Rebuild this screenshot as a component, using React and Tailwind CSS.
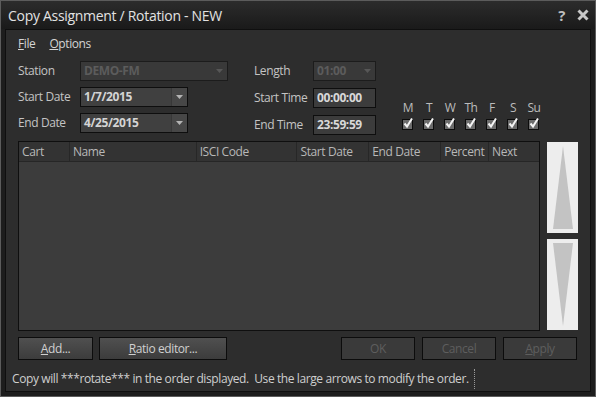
import React from 'react';

const font = { fontFamily: '"Segoe UI", "Open Sans", "Noto Sans", sans-serif', letterSpacing: '-0.4px' };

function Caret({ dim }) {
  return (
    <svg width="7" height="4" viewBox="0 0 7 4">
      <path d="M0 0 L7 0 L3.5 4 Z" fill={dim ? '#575757' : '#b4b4b4'} />
    </svg>
  );
}

function Combo({ value, width, disabled }) {
  return (
    <div
      className={`flex h-[20px] items-center border ${disabled ? 'border-[#1c1c1c] bg-[#393939]' : 'border-[#0e0e0e] bg-[#404040]'}`}
      style={{ width }}
    >
      <span className={`flex-1 pl-[3px] text-[12px] font-bold ${disabled ? 'text-[#5c5c5c]' : 'text-[#d4d4d4]'}`}>{value}</span>
      {disabled ? (
        <span className="flex w-[16px] justify-center"><Caret dim /></span>
      ) : (
        <span className="flex h-full w-[16px] items-center justify-center border-l border-[#383838] bg-[#474747]"><Caret /></span>
      )}
    </div>
  );
}

function TextBox({ value }) {
  return (
    <div className="flex h-[20px] w-[63px] items-center border border-[#0e0e0e] bg-[#3c3c3c] pl-[3px] text-[12px] font-bold text-[#d8d8d8]">
      {value}
    </div>
  );
}

function Check() {
  return (
    <svg width="14" height="14" viewBox="0 0 14 14">
      <rect x="1.5" y="3.5" width="10" height="10" fill="#6c6c6c" stroke="#0c0c0c" />
      <path d="M3.5 7.5 L6 10.5 L11 2.5" fill="none" stroke="#f4f4f4" strokeWidth="2" />
    </svg>
  );
}

function Btn({ children, width, disabled }) {
  return (
    <div
      className={`flex h-[23px] items-center justify-center border border-[#0c0c0c] text-[12px] ${disabled ? 'bg-[#3a3a3a] text-[#5e5e5e]' : 'bg-gradient-to-b from-[#505050] to-[#3c3c3c] text-[#d0d0d0]'}`}
      style={{ width }}
    >
      {children}
    </div>
  );
}

export default function App() {
  const days = ['M', 'T', 'W', 'Th', 'F', 'S', 'Su'];
  const cols = [
    ['Cart', 51],
    ['Name', 127],
    ['ISCI Code', 101],
    ['Start Date', 72],
    ['End Date', 72],
    ['Percent', 48],
    ['Next', 50],
  ];

  return (
    <div className="flex h-[397px] w-[596px] flex-col border border-[#5c5c5c] bg-[#1d1d1d]" style={font}>
      {/* title bar */}
      <div className="flex h-[28px] items-center bg-gradient-to-b from-[#2c2c2c] to-[#1a1a1a] pl-[7px] pr-[6px]">
        <span className="flex-1 text-[14px] tracking-[-0.3px] text-[#e2e2e2]">Copy Assignment / Rotation - NEW</span>
        <span className="mr-[12px] text-[15px] font-bold text-[#bdbdbd]">?</span>
        <svg width="12" height="12" viewBox="0 0 12 12">
          <path d="M1.5 1.5 L10.5 10.5 M10.5 1.5 L1.5 10.5" stroke="#c8c8c8" strokeWidth="3" />
        </svg>
      </div>

      {/* client */}
      <div className="mx-[4px] mb-[4px] flex flex-1 flex-col border border-[#0f0f0f] bg-[#2d2d2d] pl-[12px] pr-[10px]">
        <div className="mt-[5px] flex h-[18px] items-center gap-[14px] text-[12px] text-[#d4d4d4]">
          <span><u>F</u>ile</span>
          <span><u>O</u>ptions</span>
        </div>

        {/* form */}
        <div className="mt-[8px] flex h-[80px] text-[12px] text-[#c4c4c4]">
          <div className="flex flex-col gap-[6px]">
            <div className="flex items-center">
              <span className="w-[62px]">Station</span>
              <Combo value="DEMO-FM" width={148} disabled />
            </div>
            <div className="flex items-center">
              <span className="w-[62px]">Start Date</span>
              <Combo value="1/7/2015" width={108} />
            </div>
            <div className="flex items-center">
              <span className="w-[62px]">End Date</span>
              <Combo value="4/25/2015" width={108} />
            </div>
          </div>

          <div className="ml-[26px] flex flex-col gap-[7px]">
            <div className="flex items-center">
              <span className="w-[59px]">Length</span>
              <Combo value="01:00" width={63} disabled />
            </div>
            <div className="flex items-center">
              <span className="w-[59px]">Start Time</span>
              <TextBox value="00:00:00" />
            </div>
            <div className="flex items-center">
              <span className="w-[59px]">End Time</span>
              <TextBox value="23:59:59" />
            </div>
          </div>

          <div className="ml-[25px] mt-[39px] flex gap-[7px]">
            {days.map((d) => (
              <div key={d} className="flex w-[14px] flex-col items-center">
                <span className="h-[16px] text-[12px] leading-[16px] text-[#bcbcbc]">{d}</span>
                <Check />
              </div>
            ))}
          </div>
        </div>

        {/* grid + arrows */}
        <div className="flex h-[190px]">
          <div className="flex w-[522px] flex-col border border-[#0f0f0f] bg-[#3c3c3c]">
            <div className="flex h-[20px] border-b border-[#262626] bg-[#333333] text-[12px] text-[#b8b8b8]">
              {cols.map(([c, w], i) => (
                <div
                  key={c}
                  className={`flex items-center pl-[3px] ${i < cols.length - 1 ? 'border-r border-[#272727]' : ''}`}
                  style={{ width: w }}
                >
                  {c}
                </div>
              ))}
            </div>
          </div>
          <div className="ml-[7px] flex flex-col gap-[6px] pt-[1px]">
            <div className="flex h-[91px] w-[31px] items-center justify-center bg-[#ededed]">
              <svg width="22" height="83" viewBox="0 0 22 83">
                <path d="M11 0 L21 83 L1 83 Z" fill="#c3c3c3" />
              </svg>
            </div>
            <div className="flex h-[91px] w-[31px] items-center justify-center bg-[#ededed]">
              <svg width="22" height="83" viewBox="0 0 22 83">
                <path d="M1 0 L21 0 L11 83 Z" fill="#c3c3c3" />
              </svg>
            </div>
          </div>
        </div>

        {/* buttons */}
        <div className="mt-[6px] flex pr-[3px]">
          <Btn width={75}><span><u>A</u>dd...</span></Btn>
          <div className="ml-[6px]">
            <Btn width={128}><span><u>R</u>atio editor...</span></Btn>
          </div>
          <div className="flex-1" />
          <div className="flex gap-[7px]">
            <Btn width={74} disabled>OK</Btn>
            <Btn width={74} disabled>Cancel</Btn>
            <Btn width={74} disabled><span><u>A</u>pply</span></Btn>
          </div>
        </div>

        {/* status */}
        <div className="-ml-[6px] mt-[8px] flex h-[22px] items-center text-[12px] text-[#cfcfcf]">
          <span className="whitespace-pre">Copy will ***rotate*** in the order displayed.  Use the large arrows to modify the order.</span>
          <span className="ml-[5px] h-[20px] border-l border-dotted border-[#9a9a9a]" />
        </div>
      </div>
    </div>
  );
}
